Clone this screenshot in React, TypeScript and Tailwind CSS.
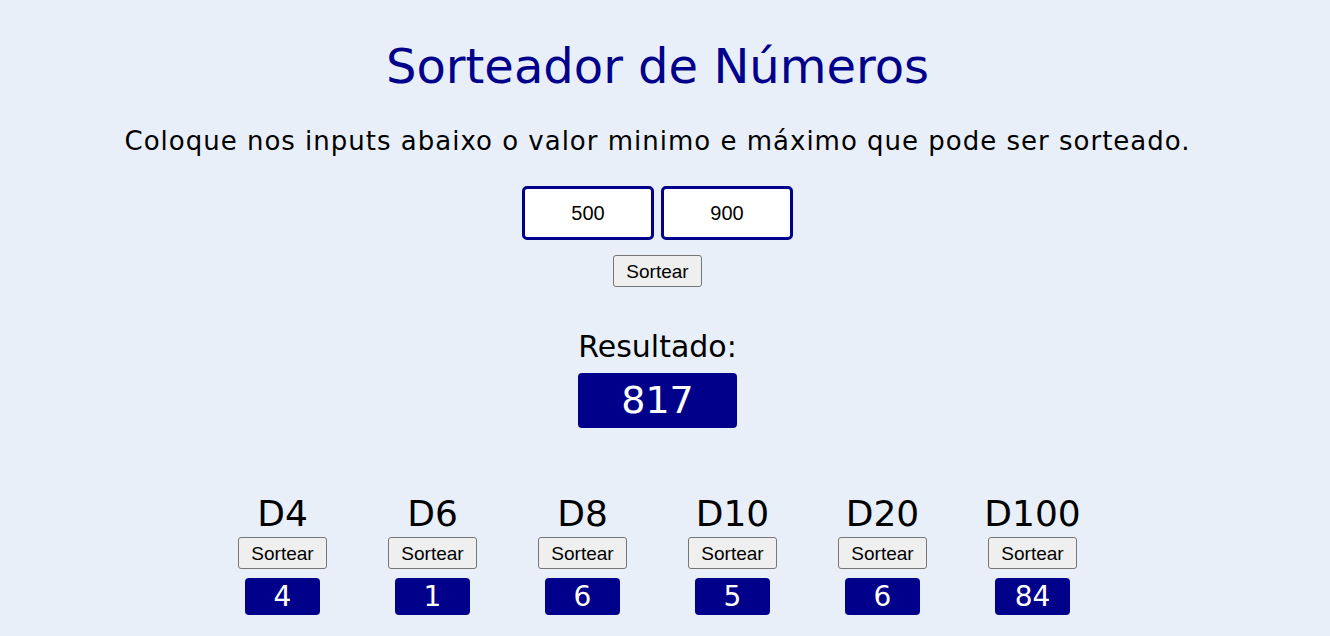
import { useState } from 'react';

const dice = [
  { label: 'D4', value: 4 },
  { label: 'D6', value: 1 },
  { label: 'D8', value: 6 },
  { label: 'D10', value: 5 },
  { label: 'D20', value: 6 },
  { label: 'D100', value: 84 },
];

const btn =
  "rounded-[3px] border border-[#767676] bg-[#efefef] px-[12px] h-8 text-[19px] leading-none text-black font-['Liberation_Sans',Arial,sans-serif]";

export default function App() {
  const [min, setMin] = useState('500');
  const [max, setMax] = useState('900');

  return (
    <div className="min-h-[636px] w-full bg-[#e8eff9] font-['DejaVu_Sans',sans-serif] text-black">
      <div className="flex w-[1315px] flex-col items-center pt-[36px]">
        <h1 className="text-[48px] leading-[60px] text-[#00008b]">Sorteador de Números</h1>
        <p className="mt-[28px] text-[26px] leading-[34px] tracking-[1px]">
          Coloque nos inputs abaixo o valor minimo e máximo que pode ser sorteado.
        </p>

        <div className="mt-[28px] flex gap-[7px]">
          <input
            value={min}
            onChange={(e) => setMin(e.target.value)}
            className="h-[54px] w-[132px] rounded-[5px] border-[3px] border-[#00008b] bg-white text-center text-[20px] font-['Liberation_Sans',Arial,sans-serif] outline-none"
          />
          <input
            value={max}
            onChange={(e) => setMax(e.target.value)}
            className="h-[54px] w-[132px] rounded-[5px] border-[3px] border-[#00008b] bg-white text-center text-[20px] font-['Liberation_Sans',Arial,sans-serif] outline-none"
          />
        </div>

        <button className={`mt-[15px] ${btn}`}>Sortear</button>

        <p className="mt-[42px] text-[30px] leading-[36px]">Resultado:</p>
        <div className="mt-[8px] flex h-[55px] w-[159px] items-center justify-center rounded-[4px] bg-[#00008b] text-[38px] text-white">
          817
        </div>

        <div className="mt-[64px] flex">
          {dice.map((d) => (
            <div key={d.label} className="flex w-[150px] flex-col items-center">
              <span className="text-[36px] leading-[44px]">{d.label}</span>
              <button className={`mt-px ${btn}`}>Sortear</button>
              <div className="mt-[9px] flex h-[37px] w-[75px] items-center justify-center rounded-[4px] bg-[#00008b] text-[28px] text-white">
                {d.value}
              </div>
            </div>
          ))}
        </div>
      </div>
    </div>
  );
}
